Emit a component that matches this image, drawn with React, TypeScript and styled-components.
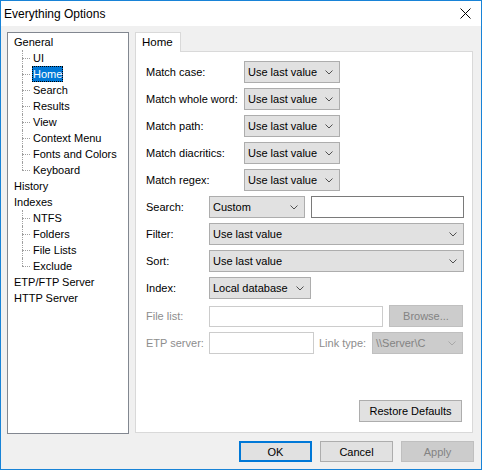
import React from "react";
import styled, { createGlobalStyle, css } from "styled-components";

const GlobalStyle = createGlobalStyle`
  html, body {
    margin: 0;
    padding: 0;
    background: #ffffff;
  }
  body {
    font-family: "Segoe UI", "Liberation Sans", Arial, sans-serif;
    font-size: 11px;
    color: #000000;
  }
`;

const Window = styled.div`
  width: 482px;
  height: 470px;
  box-sizing: border-box;
  border: 1px solid #1883d7;
  display: flex;
  flex-direction: column;
  background: #f0f0f0;
`;

const TitleBar = styled.div`
  height: 25px;
  flex-shrink: 0;
  background: #ffffff;
  display: flex;
  align-items: center;
  justify-content: space-between;
  padding: 0 10px 0 3px;
  font-size: 12px;
`;

const CloseIcon = styled.svg`
  width: 11px;
  height: 11px;
`;

const Body = styled.div`
  flex: 1;
  display: flex;
  flex-direction: column;
  padding: 6px 7px 7px 6px;
  gap: 7px;
`;

const Main = styled.div`
  height: 402px;
  display: flex;
  gap: 6px;
  margin-right: 1px;
`;

const Tree = styled.ul`
  width: 122px;
  box-sizing: border-box;
  margin: 0;
  padding: 1px 0 0 5px;
  list-style: none;
  background: #ffffff;
  border: 1px solid #828790;
`;

const TreeItem = styled.li<{ $child?: boolean; $last?: boolean }>`
  height: 16px;
  line-height: 16px;
  position: relative;
  white-space: nowrap;

  ${(p) =>
    p.$child &&
    css`
      padding-left: 19px;

      &::before {
        content: "";
        position: absolute;
        left: 9px;
        top: 8px;
        width: 8px;
        border-top: 1px dotted #a0a0a0;
      }

      &::after {
        content: "";
        position: absolute;
        left: 9px;
        top: 0;
        height: ${p.$last ? "8px" : "16px"};
        border-left: 1px dotted #a0a0a0;
      }
    `}
`;

const ItemLabel = styled.span<{ $selected?: boolean }>`
  padding: 0 1px;
  ${(p) =>
    p.$selected &&
    css`
      background: #0078d7;
      color: #ffffff;
      outline: 1px dotted #000000;
      outline-offset: -1px;
      display: inline-block;
      height: 16px;
    `}
`;

const TabArea = styled.div`
  flex: 1;
  display: flex;
  flex-direction: column;
`;

const Tab = styled.div`
  width: 46px;
  height: 20px;
  box-sizing: border-box;
  background: #ffffff;
  border: 1px solid #d9d9d9;
  border-bottom: none;
  padding: 3px 0 0 6px;
  position: relative;
  z-index: 1;
  margin-bottom: -1px;
  font-size: 11.5px;
`;

const TabPanel = styled.div`
  flex: 1;
  margin-bottom: 1px;
  background: #ffffff;
  border: 1px solid #d9d9d9;
  display: flex;
  flex-direction: column;
  padding: 9px 0 0 10px;
`;

const Form = styled.div`
  display: flex;
  flex-direction: column;
  gap: 5px;
`;

const Row = styled.div<{ $top?: number }>`
  height: 22px;
  display: flex;
  align-items: center;
  margin-top: ${(p) => p.$top ?? 0}px;
`;

const Label = styled.div<{ $width: number; $disabled?: boolean; $indent?: number }>`
  width: ${(p) => p.$width}px;
  box-sizing: border-box;
  padding-left: ${(p) => p.$indent ?? 0}px;
  flex-shrink: 0;
  color: ${(p) => (p.$disabled ? "#8d8d8d" : "#000000")};
`;

const Combo = styled.div<{ $width: number; $disabled?: boolean }>`
  width: ${(p) => p.$width}px;
  height: 22px;
  box-sizing: border-box;
  display: flex;
  align-items: center;
  justify-content: space-between;
  padding: 0 6px 0 3px;
  background: ${(p) => (p.$disabled ? "#cccccc" : "#e1e1e1")};
  border: 1px solid ${(p) => (p.$disabled ? "#bfbfbf" : "#adadad")};
  color: ${(p) => (p.$disabled ? "#838383" : "#000000")};
  flex-shrink: 0;
`;

const Chevron = styled.svg`
  width: 8px;
  height: 5px;
`;

const TextBox = styled.div<{ $width: number; $disabled?: boolean; $height?: number; $ml?: number }>`
  width: ${(p) => p.$width}px;
  height: ${(p) => p.$height ?? 22}px;
  margin-left: ${(p) => p.$ml ?? 0}px;
  box-sizing: border-box;
  background: #ffffff;
  border: 1px solid ${(p) => (p.$disabled ? "#cccccc" : "#7a7a7a")};
  flex-shrink: 0;
`;

const Button = styled.div<{ $width: number; $disabled?: boolean; $default?: boolean; $ml?: number }>`
  width: ${(p) => p.$width}px;
  height: 22px;
  margin-left: ${(p) => p.$ml ?? 0}px;
  box-sizing: border-box;
  display: flex;
  align-items: center;
  justify-content: center;
  background: ${(p) => (p.$disabled ? "#cccccc" : "#e1e1e1")};
  border: ${(p) =>
    p.$default
      ? "2px solid #0078d7"
      : `1px solid ${p.$disabled ? "#bfbfbf" : "#adadad"}`};
  color: ${(p) => (p.$disabled ? "#838383" : "#000000")};
  flex-shrink: 0;
`;

const RestoreWrap = styled.div`
  margin-top: auto;
  align-self: flex-end;
  padding: 0 10px 10px 0;
`;

const ButtonBar = styled.div`
  display: flex;
  justify-content: flex-end;
  gap: 8px;
  height: 21px;
  & > * {
    height: 21px;
  }
`;

const Select: React.FC<{ width: number; value: string; disabled?: boolean }> = ({
  width,
  value,
  disabled,
}) => (
  <Combo $width={width} $disabled={disabled}>
    <span>{value}</span>
    <Chevron viewBox="0 0 8 5">
      <polyline
        points="0.5,0.5 4,4 7.5,0.5"
        fill="none"
        stroke={disabled ? "#a8a8a8" : "#505050"}
        strokeWidth="1"
      />
    </Chevron>
  </Combo>
);

const tree: { label: string; child?: boolean; last?: boolean; selected?: boolean }[] = [
  { label: "General" },
  { label: "UI", child: true },
  { label: "Home", child: true, selected: true },
  { label: "Search", child: true },
  { label: "Results", child: true },
  { label: "View", child: true },
  { label: "Context Menu", child: true },
  { label: "Fonts and Colors", child: true },
  { label: "Keyboard", child: true, last: true },
  { label: "History" },
  { label: "Indexes" },
  { label: "NTFS", child: true },
  { label: "Folders", child: true },
  { label: "File Lists", child: true },
  { label: "Exclude", child: true, last: true },
  { label: "ETP/FTP Server" },
  { label: "HTTP Server" },
];

const matchRows = ["Match case:", "Match whole word:", "Match path:", "Match diacritics:", "Match regex:"];

export default function App() {
  return (
    <>
      <GlobalStyle />
      <Window>
        <TitleBar>
          <span>Everything Options</span>
          <CloseIcon viewBox="0 0 11 11">
            <path d="M0.5 0.5 L10.5 10.5 M10.5 0.5 L0.5 10.5" stroke="#000000" strokeWidth="1" />
          </CloseIcon>
        </TitleBar>
        <Body>
          <Main>
            <Tree>
              {tree.map((t) => (
                <TreeItem key={t.label} $child={t.child} $last={t.last}>
                  <ItemLabel $selected={t.selected}>{t.label}</ItemLabel>
                </TreeItem>
              ))}
            </Tree>
            <TabArea>
              <Tab>Home</Tab>
              <TabPanel>
                <Form>
                  {matchRows.map((m) => (
                    <Row key={m}>
                      <Label $width={98}>{m}</Label>
                      <Select width={96} value="Use last value" />
                    </Row>
                  ))}
                  <Row>
                    <Label $width={63}>Search:</Label>
                    <Select width={96} value="Custom" />
                    <TextBox $width={153} $ml={6} />
                  </Row>
                  <Row>
                    <Label $width={63}>Filter:</Label>
                    <Select width={255} value="Use last value" />
                  </Row>
                  <Row>
                    <Label $width={63}>Sort:</Label>
                    <Select width={255} value="Use last value" />
                  </Row>
                  <Row>
                    <Label $width={63}>Index:</Label>
                    <Select width={102} value="Local database" />
                  </Row>
                  <Row $top={1}>
                    <Label $width={63} $disabled>
                      File list:
                    </Label>
                    <TextBox $width={174} $height={21} $disabled />
                    <Button $width={74} $disabled $ml={6}>
                      Browse...
                    </Button>
                  </Row>
                  <Row>
                    <Label $width={63} $disabled>
                      ETP server:
                    </Label>
                    <TextBox $width={105} $disabled />
                    <Label $width={58} $indent={5} $disabled>
                      Link type:
                    </Label>
                    <Select width={91} value="\\Server\C" disabled />
                  </Row>
                </Form>
                <RestoreWrap>
                  <Button $width={103}>Restore Defaults</Button>
                </RestoreWrap>
              </TabPanel>
            </TabArea>
          </Main>
          <ButtonBar>
            <Button $width={73} $default>
              OK
            </Button>
            <Button $width={73}>Cancel</Button>
            <Button $width={73} $disabled>
              Apply
            </Button>
          </ButtonBar>
        </Body>
      </Window>
    </>
  );
}
